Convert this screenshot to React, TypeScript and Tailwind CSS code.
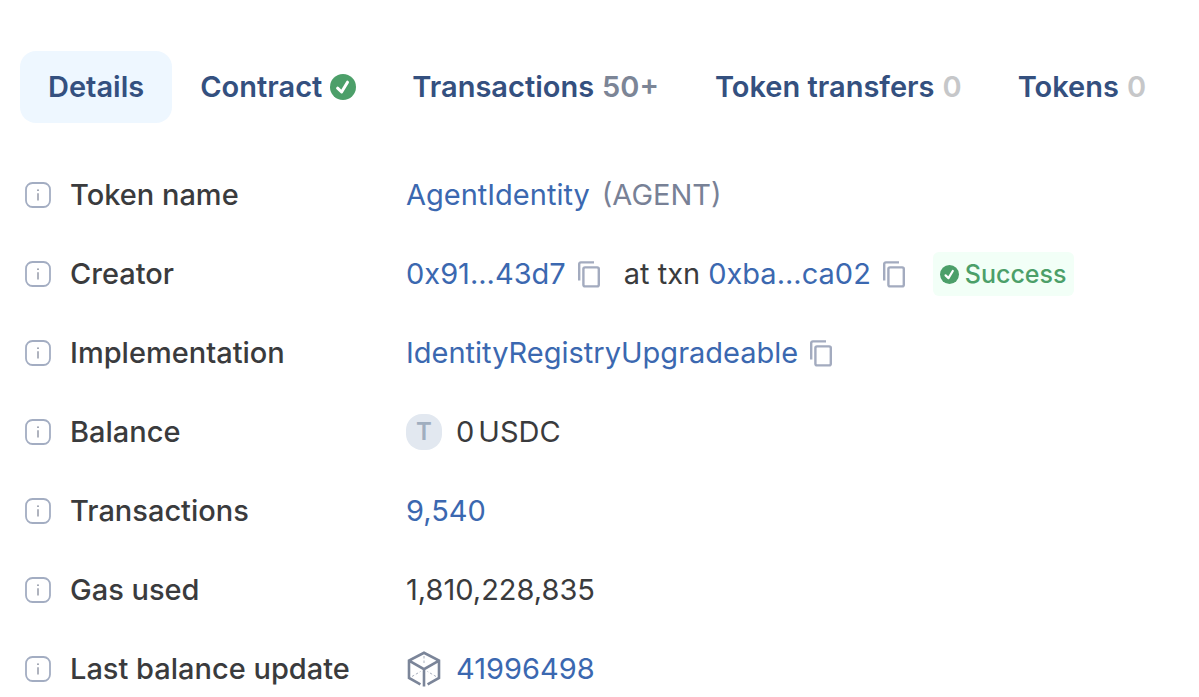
import { useState } from "react";
import type { ReactNode } from "react";

const tabs = [
  { id: "details", label: "Details" },
  { id: "contract", label: "Contract", verified: true },
  { id: "txs", label: "Transactions", count: "50+" },
  { id: "transfers", label: "Token transfers", count: "0" },
  { id: "tokens", label: "Tokens", count: "0" },
];

function CheckIcon({ className }: { className: string }) {
  return (
    <svg viewBox="0 0 26 26" className={className} aria-hidden="true">
      <circle cx="13" cy="13" r="13" fill="#4c9f69" />
      <path
        d="M7.6 14.2l4 3.8 5.9-9.8"
        fill="none"
        stroke="#fff"
        strokeWidth="3"
        strokeLinecap="round"
        strokeLinejoin="round"
      />
    </svg>
  );
}

function InfoIcon() {
  return (
    <svg
      viewBox="0 0 26 26"
      className="size-[26px] shrink-0"
      fill="none"
      aria-hidden="true"
    >
      <rect
        x="1"
        y="1"
        width="24"
        height="24"
        rx="6.5"
        stroke="#a3adc2"
        strokeWidth="1.8"
      />
      <path d="M13 11.2v7.3" stroke="#8d93a3" strokeWidth="1.4" />
      <circle cx="13" cy="8.2" r="0.9" fill="#8d93a3" />
    </svg>
  );
}

function CopyButton({ label }: { label: string }) {
  return (
    <button type="button" aria-label={label} className="shrink-0">
      <svg
        viewBox="0 0 22 27"
        className="block h-[27px] w-[22px]"
        fill="none"
        stroke="#a3abbf"
        strokeWidth="2.4"
      >
        <path d="M1.2 19.5V3a1.6 1.6 0 0 1 1.6-1.6H16" />
        <rect x="5.4" y="6.4" width="15.4" height="19" rx="1.6" />
      </svg>
    </button>
  );
}

function CubeIcon() {
  return (
    <svg
      viewBox="0 0 36 36"
      className="size-9 shrink-0"
      fill="none"
      stroke="#7b8599"
      aria-hidden="true"
    >
      <path
        d="M14.4 33.4L3 27V9.6L18 1.8l15 7.8V27l-11.4 6.4M3 9.6l15 8.6 15-8.6M18 18v17.6"
        strokeWidth="2.6"
      />
      <path
        d="M18 5v9M6 25.5l8.5-5M30 25.5l-8.5-5"
        strokeWidth="1"
        strokeDasharray="2.5 2"
        stroke="#a9b0be"
      />
    </svg>
  );
}

function Link({ children }: { children: ReactNode }) {
  return (
    <a href="#" className="text-[#3b68b0] hover:text-[#4299e1]">
      {children}
    </a>
  );
}

function Row({ label, children }: { label: string; children: ReactNode }) {
  return (
    <div className="grid min-h-11 grid-cols-[381px_1fr] items-center">
      <dt className="flex items-center gap-[19px] font-medium">
        <InfoIcon />
        {label}
      </dt>
      <dd className="flex items-center">{children}</dd>
    </div>
  );
}

export default function App() {
  const [active, setActive] = useState("details");

  return (
    <main className="bg-white pt-[51px] font-['Inter',sans-serif] text-[29px] leading-9 text-[#3a3b3d]">
      <div role="tablist" className="flex pl-5 font-semibold whitespace-nowrap">
        {tabs.map((tab) => (
          <button
            key={tab.id}
            type="button"
            role="tab"
            aria-selected={active === tab.id}
            onClick={() => setActive(tab.id)}
            className={`flex h-[72px] items-center gap-2 rounded-2xl px-7 text-[#34507f] ${
              active === tab.id ? "bg-[#eef7ff]" : ""
            }`}
          >
            {tab.label}
            {tab.verified && <CheckIcon className="size-[26px]" />}
            {tab.count && (
              <span
                className={
                  tab.count === "0" ? "text-[#c6c7c9]" : "text-[#7c8596]"
                }
              >
                {tab.count}
              </span>
            )}
          </button>
        ))}
      </div>

      <dl className="mt-[50px] flex flex-col gap-[35px] pl-[25px] whitespace-nowrap">
        <Row label="Token name">
          <div className="flex gap-3">
            <Link>AgentIdentity</Link>
            <span className="text-[#788196]">(AGENT)</span>
          </div>
        </Row>
        <Row label="Creator">
          <div className="flex items-center gap-3">
            <Link>0x91...43d7</Link>
            <CopyButton label="Copy creator address" />
          </div>
          <div className="ml-6 flex items-center gap-2">
            <span>at txn</span>
            <div className="flex items-center gap-3">
              <Link>0xba...ca02</Link>
              <CopyButton label="Copy transaction hash" />
            </div>
          </div>
          <span className="ml-7 flex items-center gap-1.5 rounded-md bg-[#f2fff7] px-[7px] py-1 text-[25px] font-medium text-[#4c9f69]">
            <CheckIcon className="size-[19px]" />
            Success
          </span>
        </Row>
        <Row label="Implementation">
          <div className="flex items-center gap-3">
            <Link>IdentityRegistryUpgradeable</Link>
            <CopyButton label="Copy implementation address" />
          </div>
        </Row>
        <Row label="Balance">
          <div className="flex items-center gap-3.5">
            <span className="flex size-9 items-center justify-center rounded-2xl bg-[#e2e8f0] text-2xl font-semibold text-[#a0aebf]">
              T
            </span>
            <div className="flex gap-1">
              <span>0</span>
              <span>USDC</span>
            </div>
          </div>
        </Row>
        <Row label="Transactions">
          <Link>9,540</Link>
        </Row>
        <Row label="Gas used">1,810,228,835</Row>
        <Row label="Last balance update">
          <div className="flex items-center gap-3.5">
            <CubeIcon />
            <Link>41996498</Link>
          </div>
        </Row>
      </dl>
    </main>
  );
}
